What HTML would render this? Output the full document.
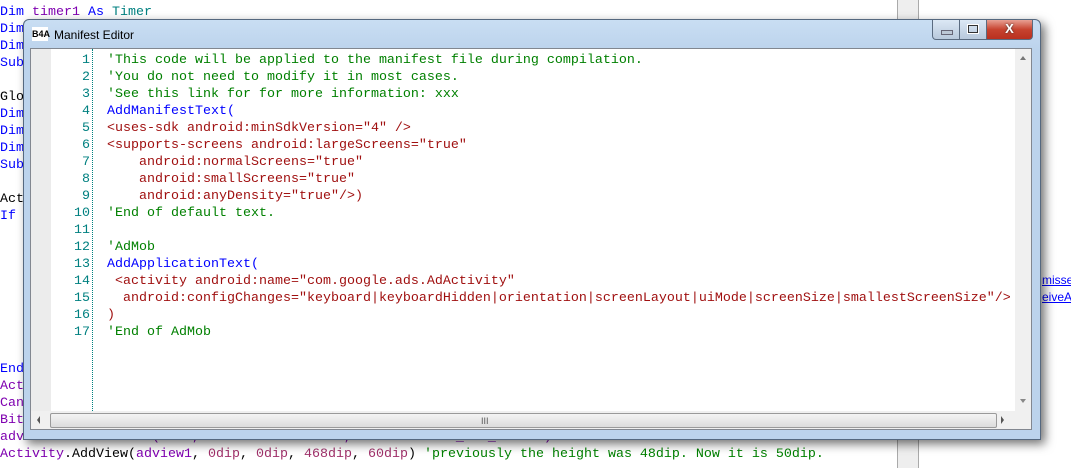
<!DOCTYPE html>
<html><head><style>
body{margin:0;width:1071px;height:468px;overflow:hidden;background:#fff;position:relative;font-family:"Liberation Mono",monospace;font-size:13.33px}
.bg{position:absolute;left:0;top:4px;line-height:17px;white-space:pre}
.k{color:#0000ff}.p{color:#7f00b0}.t{color:#008080}.g{color:#008000}.b{color:#000}.r{color:#a0306a}
.win{position:absolute;left:23px;top:19px;width:1016px;height:419px;border:1px solid #55687f;border-radius:6px 6px 0 0;background:linear-gradient(180deg,#c9def3 0,#bcd3ec 30px,#bcd3ec 100%);box-shadow:4px 4px 10px rgba(0,0,0,.55)}
.title{position:absolute;left:30px;top:8px;font-family:"Liberation Sans",sans-serif;font-size:12px;color:#000}
.logo{position:absolute;left:8px;top:7px;width:16px;height:14px;background:#fff;font:bold 9px "Liberation Sans",sans-serif;line-height:14px;text-align:center}
.ed{position:absolute;left:6px;top:28px;width:1000px;height:380px;border:1px solid #828790;background:#fff}
.gut{position:absolute;left:0;top:0;width:20px;height:362px;background:#ececec}
.ln{position:absolute;left:20px;top:3px;width:39px;text-align:right;line-height:17px;color:#008080;white-space:pre}
.dot{position:absolute;left:61px;top:0;height:362px;border-left:1px dotted #008080}
.code{position:absolute;left:76px;top:3px;line-height:17px;white-space:pre;color:#a01010}
.hs{position:absolute;left:0;top:362px;width:984px;height:18px;background:#f0f0f0}
.vs{position:absolute;left:984px;top:0;width:16px;height:380px;background:#f0f0f0}
.th{position:absolute;left:19px;top:2px;width:945px;height:13px;border:1px solid #9a9a9a;border-radius:2px;background:linear-gradient(#f4f4f4,#dcdcdc)}
.btn{position:absolute;top:0;height:19px;border:1px solid #5a6b80;border-top:none}
</style></head><body>
<div class="bg"><span class="k">Dim</span> <span class="p">timer1</span> <span class="k">As</span> <span class="t">Timer</span>
<span class="k">Dim</span>
<span class="k">Dim</span>
<span class="k">Sub</span>

<span class="b">Glo</span>
<span class="k">Dim</span>
<span class="k">Dim</span>
<span class="k">Dim</span>
<span class="k">Sub</span>

<span class="b">Act</span>
<span class="k">If</span>








<span class="k">End</span>
<span class="p">Act</span>
<span class="p">Can</span>
<span class="p">Bit</span>
<span class="p">adview1.Initialize2("Ad", "a14d2d5ce7aeba6", adview1.SIZE_IAB_BANNER)</span>
<span class="p">Activity</span>.AddView(<span class="p">adview1</span>, <span class="r">0dip</span>, <span class="r">0dip</span>, <span class="r">468dip</span>, <span class="r">60dip</span>) <span class="g">'previously the height was 48dip. Now it is 50dip.</span>
</div>
<div style="position:absolute;left:897px;top:0;width:20px;height:468px;border-left:1px solid #aaa;border-right:1px solid #aaa;background:#eee"></div>
<div style="position:absolute;left:1042px;top:272px;font:12px 'Liberation Sans',sans-serif;color:#00f;text-decoration:underline;line-height:17px">missed<br>eiveAd</div>
<div class="win">
 <div class="logo">B4A</div><div class="title">Manifest Editor</div>
 <div class="btn" style="left:908px;width:26px;border-radius:0 0 0 4px;background:linear-gradient(#dce8f5,#b8c9dc)"><div style="position:absolute;left:8px;top:10px;width:10px;height:3px;background:#bcc8d6;border:1px solid #667"></div></div>
 <div class="btn" style="left:935px;width:26px;background:linear-gradient(#dce8f5,#b8c9dc)"><div style="position:absolute;left:8px;top:5px;width:8px;height:6px;border:1px solid #333;outline:1px solid #fff"></div></div>
 <div class="btn" style="left:962px;width:45px;border-radius:0 0 4px 0;background:linear-gradient(#e8a093,#c7432f 50%,#b9301f)"><div style="position:absolute;left:0;width:45px;top:0;text-align:center;color:#fff;font:bold 13px 'Liberation Sans',sans-serif;line-height:17px;text-shadow:0 0 2px #333">X</div></div>
 <div class="ed">
  <div class="gut"></div>
  <div class="ln">1
2
3
4
5
6
7
8
9
10
11
12
13
14
15
16
17</div>
  <div class="dot"></div>
<div class="code"><span class="g">'This code will be applied to the manifest file during compilation.
'You do not need to modify it in most cases.
'See this link for for more information: xxx</span>
<span class="k">AddManifestText(</span>
&lt;uses-sdk android:minSdkVersion="4" /&gt;
&lt;supports-screens android:largeScreens="true"
    android:normalScreens="true"
    android:smallScreens="true"
    android:anyDensity="true"/&gt;)
<span class="g">'End of default text.</span>

<span class="g">'AdMob</span>
<span class="k">AddApplicationText(</span>
 &lt;activity android:name="com.google.ads.AdActivity"
  android:configChanges="keyboard|keyboardHidden|orientation|screenLayout|uiMode|screenSize|smallestScreenSize"/&gt;
)
<span class="g">'End of AdMob</span></div>
  <div class="vs"><div style="position:absolute;left:5px;top:7px;border:3px solid transparent;border-bottom:4px solid #777;border-top:0"></div><div style="position:absolute;left:5px;top:350px;border:3px solid transparent;border-top:4px solid #888;border-bottom:0"></div></div>
  <div class="hs"><div style="position:absolute;left:6px;top:5px;border:4px solid transparent;border-right:3px solid #555;border-left:0"></div><div class="th"><div style="position:absolute;left:430px;top:2px;font:9px 'Liberation Sans';color:#555">III</div></div><div style="position:absolute;left:970px;top:5px;border:4px solid transparent;border-left:3px solid #555;border-right:0"></div></div>
 </div>
</div>
</body></html>
